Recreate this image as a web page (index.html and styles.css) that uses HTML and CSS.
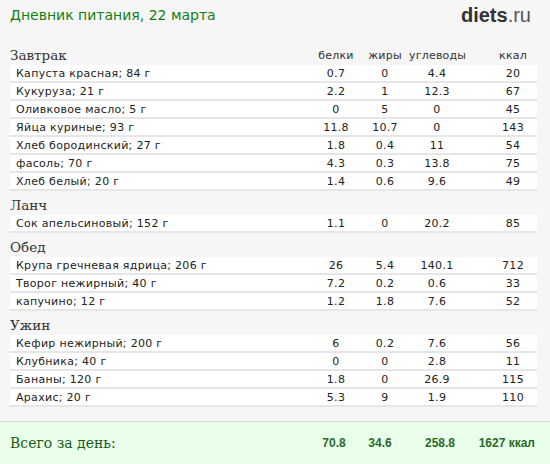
FILE: index.html
```html
<!DOCTYPE html>
<html lang="ru">
<head>
<meta charset="utf-8">
<link rel="stylesheet" href="styles.css">
</head>
<body>
<div class="page">
  <header class="top">
    <h1 class="title">Дневник питания, 22 марта</h1>
    <div class="logo"><b>diets</b>.ru</div>
  </header>

  <section class="meal">
    <div class="meal-head">
      <h2 class="meal-name">Завтрак</h2>
      <span class="col">белки</span><span class="col">жиры</span><span class="col">углеводы</span><span></span><span class="col">ккал</span>
    </div>
    <div class="row"><span class="name">Капуста красная; 84 г</span><span class="col">0.7</span><span class="col">0</span><span class="col">4.4</span><span></span><span class="col">20</span></div>
    <div class="row"><span class="name">Кукуруза; 21 г</span><span class="col">2.2</span><span class="col">1</span><span class="col">12.3</span><span></span><span class="col">67</span></div>
    <div class="row"><span class="name">Оливковое масло; 5 г</span><span class="col">0</span><span class="col">5</span><span class="col">0</span><span></span><span class="col">45</span></div>
    <div class="row"><span class="name">Яйца куриные; 93 г</span><span class="col">11.8</span><span class="col">10.7</span><span class="col">0</span><span></span><span class="col">143</span></div>
    <div class="row"><span class="name">Хлеб бородинский; 27 г</span><span class="col">1.8</span><span class="col">0.4</span><span class="col">11</span><span></span><span class="col">54</span></div>
    <div class="row"><span class="name">фасоль; 70 г</span><span class="col">4.3</span><span class="col">0.3</span><span class="col">13.8</span><span></span><span class="col">75</span></div>
    <div class="row"><span class="name">Хлеб белый; 20 г</span><span class="col">1.4</span><span class="col">0.6</span><span class="col">9.6</span><span></span><span class="col">49</span></div>
  </section>

  <section class="meal">
    <div class="meal-head"><h2 class="meal-name">Ланч</h2></div>
    <div class="row"><span class="name">Сок апельсиновый; 152 г</span><span class="col">1.1</span><span class="col">0</span><span class="col">20.2</span><span></span><span class="col">85</span></div>
  </section>

  <section class="meal">
    <div class="meal-head"><h2 class="meal-name">Обед</h2></div>
    <div class="row"><span class="name">Крупа гречневая ядрица; 206 г</span><span class="col">26</span><span class="col">5.4</span><span class="col">140.1</span><span></span><span class="col">712</span></div>
    <div class="row"><span class="name">Творог нежирный; 40 г</span><span class="col">7.2</span><span class="col">0.2</span><span class="col">0.6</span><span></span><span class="col">33</span></div>
    <div class="row"><span class="name">капучино; 12 г</span><span class="col">1.2</span><span class="col">1.8</span><span class="col">7.6</span><span></span><span class="col">52</span></div>
  </section>

  <section class="meal">
    <div class="meal-head"><h2 class="meal-name">Ужин</h2></div>
    <div class="row"><span class="name">Кефир нежирный; 200 г</span><span class="col">6</span><span class="col">0.2</span><span class="col">7.6</span><span></span><span class="col">56</span></div>
    <div class="row"><span class="name">Клубника; 40 г</span><span class="col">0</span><span class="col">0</span><span class="col">2.8</span><span></span><span class="col">11</span></div>
    <div class="row"><span class="name">Бананы; 120 г</span><span class="col">1.8</span><span class="col">0</span><span class="col">26.9</span><span></span><span class="col">115</span></div>
    <div class="row"><span class="name">Арахис; 20 г</span><span class="col">5.3</span><span class="col">9</span><span class="col">1.9</span><span></span><span class="col">110</span></div>
  </section>

  <footer class="total">
    <span class="total-label">Всего за день:</span>
    <span class="tcol">70.8</span><span class="tcol">34.6</span><span class="tcol">258.8</span><span class="tkcal">1627 ккал</span>
  </footer>
</div>
</body>
</html>
```

FILE: styles.css
```css
* { box-sizing: border-box; }
html, body { margin: 0; padding: 0; }
body {
  background: #f6f6f6;
  font-family: "DejaVu Sans", Verdana, sans-serif;
  color: #222;
  width: 550px;
  height: 464px;
  overflow: hidden;
}
.page {
  display: flex;
  flex-direction: column;
  height: 464px;
}
.top {
  display: flex;
  justify-content: space-between;
  align-items: center;
  padding: 0 19px 0 10px;
  height: 30px;
}
.title {
  margin: 0;
  font-family: "DejaVu Sans", Verdana, sans-serif;
  font-weight: normal;
  font-size: 14px;
  color: #128012;
}
.logo {
  font-family: "Liberation Sans", Arial, sans-serif;
  font-size: 20px;
  color: #555;
}
.logo b { color: #333; font-weight: bold; }

.meal { padding: 0 13px 0 10px; }
.meal-head, .row {
  display: grid;
  grid-template-columns: 301px 50px 48px 56px 24px 48px;
  align-items: center;
}
.meal-head { height: 24px; padding-top: 4px; }
.meal:first-of-type .meal-head { margin-top: 11px; }
.meal-name {
  margin: 0;
  font-family: "DejaVu Serif", Georgia, serif;
  font-weight: normal;
  font-size: 13.5px;
  color: #333;
}
.meal-head .col { font-size: 11px; color: #333; letter-spacing: 0.2px; }
.col { text-align: center; }
.row {
  height: 18px;
  background: #fff;
  border-bottom: 2px solid #e6e6e6;
  font-size: 11px;
  letter-spacing: 0.3px;
}
.name { padding-left: 6px; white-space: nowrap; }

.total {
  margin-top: auto;
  height: 43px;
  background: #eaffea;
  border-top: 1px solid #dcdcdc;
  display: grid;
  grid-template-columns: 301px 46px 46px 74px 58px;
  align-items: center;
  padding: 0 15px 0 10px;
}
.total-label {
  font-family: "DejaVu Serif", Georgia, serif;
  font-size: 14px;
  color: #1a5a1a;
  white-space: nowrap;
}
.tcol, .tkcal {
  font-family: "Liberation Sans", Arial, sans-serif;
  font-weight: bold;
  font-size: 12px;
  color: #2a6a2a;
  text-align: center;
  white-space: nowrap;
}
.tkcal { text-align: right; }
```
